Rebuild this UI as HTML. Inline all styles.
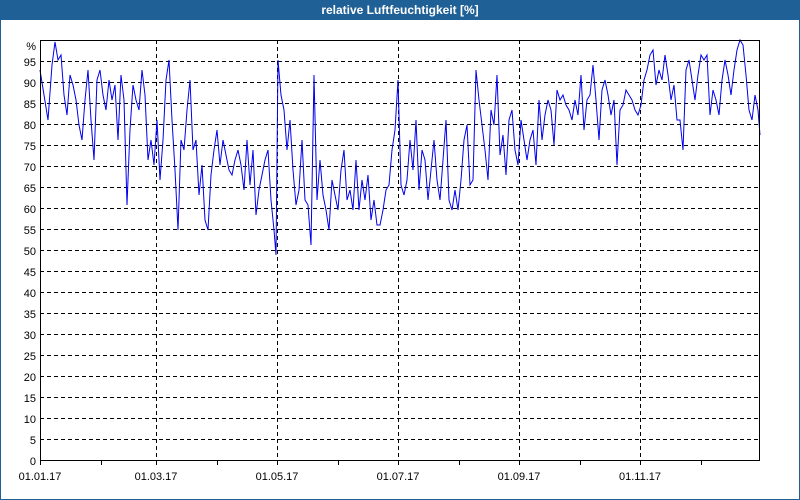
<!DOCTYPE html>
<html><head><meta charset="utf-8"><style>
html,body{margin:0;padding:0;width:800px;height:500px;overflow:hidden;background:#fff}
</style></head><body>
<svg width="800" height="500" xmlns="http://www.w3.org/2000/svg" font-family="Liberation Sans, sans-serif" font-size="11">
<rect x="0" y="0" width="800" height="500" fill="#fff"/>
<rect x="0" y="0" width="800" height="20" fill="#1f6096"/>
<rect x="0" y="0" width="1" height="500" fill="#1f6096"/>
<rect x="799" y="0" width="1" height="500" fill="#1f6096"/>
<rect x="0" y="499" width="800" height="1" fill="#1f6096"/>
<text x="400" y="14" fill="#fff" font-weight="bold" font-size="12" text-anchor="middle">relative Luftfeuchtigkeit [%]</text>
<g stroke="#000" stroke-dasharray="4,3" stroke-width="1">
<path d="M40 61.5H760M40 82.5H760M40 103.5H760M40 124.5H760M40 145.5H760M40 166.5H760M40 187.5H760M40 208.5H760M40 229.5H760M40 250.5H760M40 271.5H760M40 292.5H760M40 313.5H760M40 334.5H760M40 355.5H760M40 376.5H760M40 397.5H760M40 418.5H760M40 439.5H760"/>
<path d="M156.5 40V461M277.5 40V461M398.5 40V461M519.5 40V461M640.5 40V461"/>
</g>
<polyline fill="none" stroke="#0000ee" stroke-width="1" points="40,70 44,95 48,120 52,65 55,42 58,60 61,55 64,95 67,115 70,75 73,85 76,100 79,125 82,140 85,100 88,70 91,120 94,160 97,80 100,70 103,95 106,110 109,80 112,100 115,85 118,140 121,75 124,100 127,205 130,130 133,85 136,100 139,110 142,70 145,95 148,160 151,140 154,165 157,120 160,180 163,140 166,80 169,60 172,120 175,170 178,230 181,140 184,150 187,110 190,80 193,150 196,140 199,195 202,165 205,220 208,230 211,175 214,150 217,130 220,165 223,140 226,155 229,170 232,175 235,160 238,150 241,165 244,190 247,140 250,185 253,150 256,215 259,190 262,175 265,160 268,150 271,200 274,230 276,255 278,60 281,95 284,110 287,150 290,120 293,170 296,205 299,190 302,140 305,200 308,205 311,245 314,75 317,200 320,160 323,195 326,210 329,230 332,180 335,195 338,210 341,170 344,150 347,200 350,190 353,210 356,160 359,210 362,180 365,200 368,175 371,220 374,200 377,225 380,225 383,210 386,190 389,185 392,150 395,130 398,80 401,185 404,195 407,180 410,140 413,170 416,120 419,190 422,150 425,160 428,200 431,170 434,140 437,180 440,200 443,160 446,120 449,200 452,210 455,190 458,210 461,180 464,140 467,125 470,185 473,180 476,70 479,100 482,125 485,150 488,180 491,110 494,125 497,75 500,155 503,135 506,175 509,120 512,110 515,150 518,165 521,120 524,140 527,160 530,140 533,130 536,165 539,100 542,140 545,115 548,100 551,110 554,145 557,90 560,100 563,95 566,105 569,110 572,120 575,100 578,115 581,75 584,130 587,100 590,95 593,65 596,100 599,140 602,90 605,80 608,95 611,115 614,100 617,165 620,110 623,105 626,90 629,95 632,100 635,110 638,115 641,105 644,80 647,70 650,55 653,50 656,85 659,70 662,80 665,55 668,75 671,100 674,85 677,120 680,120 683,150 686,70 689,60 692,80 695,100 698,75 701,55 704,60 707,55 710,115 713,90 716,100 719,115 722,80 725,60 728,75 731,95 734,70 737,50 740,40 743,45 746,75 749,110 752,120 755,95 758,110 760,135"/>
<rect x="40.5" y="40.5" width="719" height="420" fill="none" stroke="#000" stroke-width="1"/>
<path d="M40.5 461V465M101.5 461V465M156.5 461V465M217.5 461V465M277.5 461V465M338.5 461V465M398.5 461V465M459.5 461V465M519.5 461V465M580.5 461V465M640.5 461V465M701.5 461V465" stroke="#000"/>
<g text-anchor="end" fill="#000">
<text x="36" y="50">%</text>
<text x="36" y="66">95</text><text x="36" y="87">90</text><text x="36" y="108">85</text><text x="36" y="129">80</text>
<text x="36" y="150">75</text><text x="36" y="171">70</text><text x="36" y="192">65</text><text x="36" y="213">60</text>
<text x="36" y="234">55</text><text x="36" y="255">50</text><text x="36" y="276">45</text><text x="36" y="297">40</text>
<text x="36" y="318">35</text><text x="36" y="339">30</text><text x="36" y="360">25</text><text x="36" y="381">20</text>
<text x="36" y="402">15</text><text x="36" y="423">10</text><text x="36" y="444">5</text><text x="36" y="465">0</text>
</g>
<g text-anchor="middle" fill="#000">
<text x="40" y="480">01.01.17</text><text x="156" y="480">01.03.17</text><text x="277" y="480">01.05.17</text>
<text x="398" y="480">01.07.17</text><text x="519" y="480">01.09.17</text><text x="640" y="480">01.11.17</text>
</g>
</svg>
</body></html>
